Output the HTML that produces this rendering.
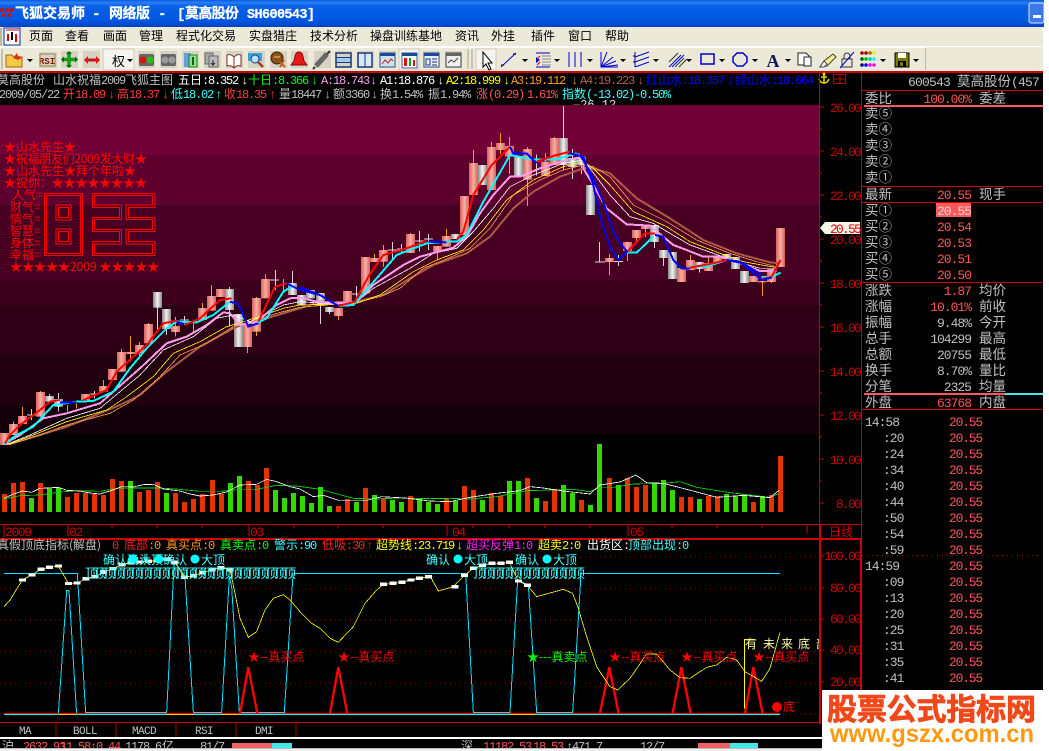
<!DOCTYPE html>
<html><head><meta charset="utf-8"><title>飞狐交易师</title>
<style>
html,body{margin:0;padding:0;background:#fff;width:1049px;height:751px;overflow:hidden}
svg{display:block}
text{font-family:"Liberation Mono","WenQuanYi Zen Hei","Noto Sans CJK SC",monospace;white-space:pre}
.c,tspan.c{font-family:"WenQuanYi Zen Hei","Noto Sans CJK SC",sans-serif;letter-spacing:0}
.r12{font-size:12px;letter-spacing:-1.2px}
.r12 tspan.c{font-size:12px}
.p{font-size:13.5px;fill:#c0c0c0;font-family:"WenQuanYi Zen Hei","Noto Sans CJK SC",sans-serif}
.v{font-size:13px;letter-spacing:-1px;text-anchor:end;fill:#ff5555}
.ax{font-size:13px;letter-spacing:-1.8px;fill:#c80000;text-anchor:end}
.t{font-size:13px;letter-spacing:-1.2px;fill:#ff5555}
.tm{font-size:13px;letter-spacing:-1px;fill:#c0c0c0}
.mn{font-size:12px;fill:#000;font-family:"WenQuanYi Zen Hei","Noto Sans CJK SC",sans-serif}
.rd{font-size:12px;fill:#f00;font-family:"WenQuanYi Zen Hei","Noto Sans CJK SC",sans-serif}
.l{fill:none;shape-rendering:crispEdges}
.dl{stroke:#a00000;stroke-dasharray:1 4;stroke-width:1}
</style></head><body>
<svg xmlns="http://www.w3.org/2000/svg" width="1049" height="751" viewBox="0 0 1049 751">
<defs>
<linearGradient id="tb" x1="0" y1="0" x2="0" y2="1">
<stop offset="0" stop-color="#0a5ae0"/><stop offset=".1" stop-color="#2a80f4"/><stop offset=".22" stop-color="#0a60e8"/><stop offset=".75" stop-color="#0058e0"/><stop offset="1" stop-color="#0042c4"/></linearGradient>
<linearGradient id="pk" x1="0" x2="1" y1="0" y2="0"><stop offset="0" stop-color="#d9605a"/><stop offset=".5" stop-color="#f8b0a6"/><stop offset="1" stop-color="#d9605a"/></linearGradient>
<linearGradient id="gy" x1="0" x2="1" y1="0" y2="0"><stop offset="0" stop-color="#8a8a8a"/><stop offset=".5" stop-color="#f2f2f2"/><stop offset="1" stop-color="#8a8a8a"/></linearGradient>
<clipPath id="cc"><rect x="0" y="105" width="819" height="340"/></clipPath>
<clipPath id="cl"><rect x="0" y="539" width="820" height="183"/></clipPath>
<clipPath id="cs"><rect x="0" y="739" width="1043" height="9"/></clipPath>
<clipPath id="ct"><rect x="0" y="100" width="819" height="5"/></clipPath>
<clipPath id="cr"><rect x="862" y="72" width="180" height="20"/></clipPath>
<clipPath id="c0"><rect x="0" y="72" width="815" height="30"/></clipPath>
</defs>

<!-- window -->
<rect x="0" y="0" width="1043" height="751" fill="#000"/>
<rect x="0" y="0" width="1044" height="27" fill="url(#tb)"/>
<!-- title icon -->
<g fill="#d01010"><circle cx="2" cy="10" r="2"/><circle cx="7" cy="10" r="2"/><circle cx="12" cy="10" r="2"/><circle cx="4" cy="15" r="2"/><circle cx="9" cy="15" r="2"/></g>
<g fill="#fff" font-weight="bold" font-size="14" stroke="#fff" stroke-width=".25">
<text class="c" x="15" y="18" font-size="14" textLength="70">飞狐交易师</text>
<text x="92" y="18">-</text>
<text class="c" x="109" y="18" textLength="41">网络版</text>
<text x="158" y="18">-</text>
<text x="177" y="18">[</text><text class="c" x="185" y="18" textLength="54">莫高股份</text>
<text x="247" y="18" font-size="13.5" textLength="68">SH600543]</text>
</g>
<rect x="1029" y="3" width="15" height="20" rx="2" fill="#3c78e8" stroke="#dfe8ff"/>
<rect x="1033" y="15" width="8" height="3" fill="#fff"/>

<!-- menu -->
<rect x="0" y="27" width="1044" height="20" fill="#ece9d8"/>
<rect x="0" y="46" width="1044" height="1" fill="#fff"/>
<rect x="0" y="28" width="2" height="18" fill="#bdb9a4"/>
<rect x="4" y="28" width="16" height="17" fill="#fff" stroke="#0a2a9a"/>
<path d="M6 30h13" stroke="#d00000"/><rect x="7" y="34" width="2" height="7" fill="#e00000"/><rect x="11" y="32" width="2" height="8" fill="#000"/><rect x="15" y="34" width="2" height="8" fill="#e00000"/>
<g class="mn">
<text class="mn" x="29" y="40">页面</text><text class="mn" x="65" y="40">查看</text><text class="mn" x="103" y="40">画面</text><text class="mn" x="139" y="40">管理</text><text class="mn" x="176" y="40">程式化交易</text><text class="mn" x="249" y="40">实盘猎庄</text><text class="mn" x="310" y="40">技术分析</text><text class="mn" x="370" y="40">操盘训练基地</text><text class="mn" x="455" y="40">资讯</text><text class="mn" x="491" y="40">外挂</text><text class="mn" x="531" y="40">插件</text><text class="mn" x="568" y="40">窗口</text><text class="mn" x="605" y="40">帮助</text>
</g>

<!-- toolbar -->
<rect x="0" y="47" width="1044" height="24" fill="#ece9d8"/>
<rect x="0" y="47" width="926" height="1" fill="#fff"/>
<rect x="925" y="48" width="1" height="22" fill="#bdb9a4"/>
<rect x="1" y="49" width="2" height="20" fill="#c4c0aa"/>
<!-- button bgs -->
<g fill="#d6d3c4">
<rect x="39" y="52" width="18" height="16"/><rect x="61" y="51" width="17" height="17"/><rect x="83" y="51" width="17" height="17"/>
<rect x="138" y="51" width="17" height="17"/><rect x="160" y="51" width="17" height="17"/><rect x="182" y="51" width="17" height="17"/><rect x="204" y="51" width="17" height="17"/><rect x="226" y="51" width="17" height="17"/><rect x="248" y="51" width="17" height="17"/><rect x="270" y="51" width="17" height="17"/><rect x="291" y="51" width="17" height="17"/><rect x="314" y="51" width="17" height="17"/><rect x="335" y="51" width="17" height="17"/><rect x="357" y="51" width="17" height="17"/><rect x="379" y="51" width="17" height="17"/>
<rect x="423" y="51" width="17" height="17"/><rect x="445" y="51" width="17" height="17"/>
</g>
<rect x="103" y="49" width="31" height="21" fill="#f5f4ee" stroke="#cfccba"/>
<rect x="399" y="49" width="20" height="21" fill="#f5f4ee" stroke="#cfccba"/>
<rect x="476" y="49" width="20" height="21" fill="#f5f4ee" stroke="#cfccba"/>
<path d="M468 49v20M472 49v20" stroke="#bdb9a4" stroke-width="1.5"/>
<!-- folder -->
<path d="M6 55h6l2 2h8v10H6z" fill="#f5c84a" stroke="#9a6a10"/><path d="M13 58l4-5 1 3 5 1-5 3z" fill="#e03010"/>
<g fill="#000"><path d="M27 59h6l-3 3zM127 59h6l-3 3zM522 59h6l-3 3zM554 59h6l-3 3zM587 59h6l-3 3zM620 59h6l-3 3zM653 59h6l-3 3zM686 59h6l-3 3zM719 59h6l-3 3zM752 59h6l-3 3zM785 59h6l-3 3zM880 59h6l-3 3zM913 59h6l-3 3z"/></g>
<text x="47" y="64" font-size="9" fill="#7a2000" text-anchor="middle" font-weight="bold">RSI</text>
<rect x="40" y="54" width="15" height="12" fill="none" stroke="#a08050"/>
<path d="M69 52v15M62 59.500h15" stroke="#1a9a1a" stroke-width="3.500"/><path d="M69 51l-3 3h6zM69 68l-3-3h6zM61 59.500l3-3v6zM78 59.500l-3-3v6z" fill="#0a6a0a"/>
<path d="M85 60h14" stroke="#c01818" stroke-width="3"/><path d="M84 60l4-4v8zM100 60l-4-4v8z" fill="#e01818"/>
<text class="c" x="112" y="66" font-size="13" fill="#000">权</text>
<rect x="139" y="54" width="15" height="12" rx="2" fill="#666"/><circle cx="143" cy="60" r="3.500" fill="#e01010"/><circle cx="150" cy="60" r="3.500" fill="#20c020"/>
<rect x="161" y="54" width="15" height="12" rx="2" fill="#666"/><circle cx="165" cy="60" r="3.500" fill="#999"/><circle cx="172" cy="60" r="3.500" fill="#999"/>
<rect x="184" y="53" width="7" height="14" fill="#60a0e0"/><rect x="189" y="55" width="8" height="12" fill="#8ee08e" stroke="#208020"/><path d="M193 57v8" stroke="#0a6a0a" stroke-width="2"/>
<rect x="205" y="53" width="8" height="11" fill="#aaa" stroke="#666"/><rect x="209" y="56" width="9" height="11" fill="#bbb" stroke="#666"/><path d="M213 60v4m-2-1l2 2 2-2" stroke="#222" fill="none"/>
<path d="M227 55c3-1 5 0 7 2 2-2 4-3 7-2v11c-3-1-5 0-7 2-2-2-4-3-7-2z" fill="#fff" stroke="#803020"/><path d="M234 57v11" stroke="#803020"/>
<rect x="248" y="53" width="14" height="8" fill="#40a0d0"/><circle cx="255" cy="59" r="4" fill="#bfe0ff" stroke="#0a4a90"/><path d="M258 62l5 5" stroke="#a04010" stroke-width="2.500"/>
<circle cx="277" cy="58" r="6" fill="#8a5020" stroke="#3a2000"/><path d="M274 57h6" stroke="#f0d040"/><path d="M280 62l5 5M284 60l-4 7" stroke="#c06020" stroke-width="2"/>
<path d="M299 52c-4 0-4 5-5 9l-3 4h16l-3-4c-1-4-1-9-5-9z" fill="#e81818" stroke="#900"/>
<path d="M316 66l11-12" stroke="#666" stroke-width="5"/><path d="M327 54l3-3M315 67l-2 2" stroke="#333" stroke-width="2"/>
<g fill="none" stroke="#1a3a7a"><rect x="336" y="53" width="15" height="14" stroke-width="1.500"/><path d="M336 57.500h15M336 62.500h15"/></g><rect x="337" y="58" width="13" height="4" fill="#a0c8f0"/>
<rect x="358" y="53" width="14" height="14" fill="#d8e8f8" stroke="#1a3a7a" stroke-width="1.500"/><path d="M365 53v14" stroke="#1a3a7a"/>
<rect x="380" y="53" width="15" height="14" fill="#cfe0f0" stroke="#3a5a8a"/><rect x="380" y="53" width="15" height="3" fill="#1a4a9a"/><path d="M382 64l3-4 3 3 3-4 2 2" stroke="#c02020" fill="none"/>
<rect x="402" y="53" width="15" height="15" fill="#fff" stroke="#3a5a8a"/><rect x="402" y="53" width="15" height="3" fill="#1a4a9a"/><rect x="404" y="58" width="3" height="8" fill="#e01010"/><rect x="409" y="58" width="2" height="8" fill="#10a010"/><rect x="413" y="60" width="2" height="6" fill="#e01010"/>
<rect x="424" y="53" width="15" height="14" fill="#e8eef8" stroke="#3a5a8a"/><rect x="424" y="53" width="15" height="3" fill="#1a4a9a"/><path d="M426 59h4v6h-4zM432 59h5M432 62h5M432 65h5" stroke="#1a3a7a" fill="none"/>
<rect x="446" y="53" width="15" height="14" fill="#eee" stroke="#444"/><rect x="446" y="53" width="15" height="3" fill="#666"/><path d="M448 63l3-3 3 2 4-4" stroke="#444" fill="none"/>
<!-- drawing tools -->
<path d="M483 52v15l3-3 3 6 2-1-3-6h4z" fill="#fff" stroke="#000"/>
<path d="M501 67l15-14" stroke="#0000d0"/><path d="M501 65h3M513 54h3" stroke="#000"/>
<g stroke="#0000c0" fill="none"><path d="M536 53h14"/><path d="M536 67h14"/></g><g stroke="#888"><path d="M542 56h9M542 59h9M542 62h9M542 65h9"/></g><path d="M536 57l4 3-4 3z" fill="#0000c0"/><path d="M540 56l-3 3M540 62l-3 3" stroke="#c00"/>
<path d="M569 52v15M575 52v15M581 52v15" stroke="#0000d0"/>
<g stroke="#0000d0" fill="none"><path d="M601 67l6-15M601 67l12-10M601 67l15-6M601 67l17-2M601 52v15h17"/></g>
<g stroke="#0000d0" fill="none"><path d="M635 52v15M635 57l14-5M635 62l14-5M635 67l14-5"/></g><path d="M633 56h2M633 62h2" stroke="#000"/>
<g stroke="#333" fill="none"><path d="M669 67l12-12M672 67l12-12" stroke="#0000d0"/><path d="M669 62l9-9M675 67l9-9M679 67l8-8"/></g>
<rect x="701" y="54" width="13" height="10" fill="none" stroke="#0000d0" stroke-width="1.500"/>
<path d="M735 53h6l4 4v5l-4 4h-6l-4-4v-5z" fill="none" stroke="#0000d0" stroke-width="1.500" transform="translate(2 0)"/>
<text x="773" y="67" font-size="18" font-weight="bold" fill="#14145a" text-anchor="middle" style="font-family:'Liberation Serif',serif">A</text>
<path d="M798 53h8l3 3v9h-11z" fill="#fff" stroke="#222"/><rect x="804" y="57" width="7" height="9" fill="#fff" stroke="#222"/>
<path d="M820 67l4-6 9-7 3 3-9 9z" fill="#f6ee8a" stroke="#444"/><path d="M820 67l4-6 3 3-3 3z" fill="#fff" stroke="#444"/>
<rect x="842" y="59" width="10" height="8" fill="none" stroke="#333"/><path d="M844 59v-3a3 3 0 0 1 6 0v3" fill="none" stroke="#333"/><path d="M840 68l14-16" stroke="#0000d0"/>
<g><circle cx="862" cy="53" r="1.800" fill="#a00000"/><circle cx="866" cy="53" r="1.800" fill="#a00000"/><circle cx="870" cy="53" r="1.800" fill="#808000"/><circle cx="874" cy="53" r="1.800" fill="#eeee00"/>
<circle cx="862" cy="59" r="1.800" fill="#006000"/><circle cx="866" cy="59" r="1.800" fill="#00c000"/><circle cx="870" cy="59" r="1.800" fill="#00c0c0"/><circle cx="874" cy="59" r="1.800" fill="#00ffff"/>
<circle cx="862" cy="65" r="1.800" fill="#000090"/><circle cx="866" cy="65" r="1.800" fill="#0000ff"/><circle cx="870" cy="65" r="1.800" fill="#ff00ff"/><circle cx="874" cy="65" r="1.800" fill="#ff00ff"/></g>
<rect x="895" y="53" width="14" height="14" fill="#7a7a00" stroke="#000"/><rect x="898" y="53" width="8" height="5" fill="#fff"/><rect x="898" y="61" width="8" height="6" fill="#000"/><rect x="900" y="62" width="3" height="4" fill="#7a7a00"/>

<!-- top red line -->
<rect x="0" y="71" width="1043" height="2" fill="#d00000"/>

<!-- info rows -->
<g clip-path="url(#c0)">
<g class="r12">
<text class="r12" x="-3" y="84" fill="#c0c0c0"><tspan class="c">莫高股份</tspan></text>
<text class="r12" x="53" y="84" fill="#c0c0c0"><tspan class="c">山水祝福</tspan>2009<tspan class="c">飞狐主图</tspan></text>
<text class="r12" x="178" y="84" fill="#fff"><tspan class="c">五日</tspan>:8.352</text><text class="r12" x="241" y="84" fill="#fff">↓</text>
<text class="r12" x="248" y="84" fill="#00ff00"><tspan class="c">十日</tspan>:8.366</text><text class="r12" x="311" y="84" fill="#00ff00">↓</text>
<text class="r12" x="321" y="84" fill="#ff9cf0">A:18.743</text><text class="r12" x="370" y="84" fill="#ff9cf0">↓</text>
<text class="r12" x="380" y="84" fill="#fff">A1:18.876</text><text class="r12" x="437" y="84" fill="#fff">↓</text>
<text class="r12" x="446" y="84" fill="#ffff00">A2:18.999</text><text class="r12" x="503" y="84" fill="#ffff00">↓</text>
<text class="r12" x="511" y="84" fill="#ff9a30">A3:19.112</text><text class="r12" x="571" y="84" fill="#ff9a30">↓</text>
<text class="r12" x="580" y="84" fill="#b06050">A4:19.223</text><text class="r12" x="637" y="84" fill="#b06050">↓</text>
<text class="r12" x="646" y="84" fill="#0000ff"><tspan class="c">红山水</tspan>:18.357</text><text class="r12" x="727" y="84" fill="#0000ff">↓</text>
<text class="r12" x="735" y="84" fill="#0000ff"><tspan class="c">绿山水</tspan>:18.664</text>

<text class="r12" x="-1" y="98" fill="#c0c0c0">2009/05/22</text>
<text class="r12" x="63" y="98" fill="#ff3c3c"><tspan class="c">开</tspan>18.09</text><text class="r12" x="108" y="98" fill="#ff3c3c">↓</text>
<text class="r12" x="117" y="98" fill="#ff3c3c"><tspan class="c">高</tspan>18.37</text><text class="r12" x="162" y="98" fill="#ff3c3c">↓</text>
<text class="r12" x="171" y="98" fill="#40ffff"><tspan class="c">低</tspan>18.02</text><text class="r12" x="215" y="98" fill="#40ffff">↑</text>
<text class="r12" x="224" y="98" fill="#ff3c3c"><tspan class="c">收</tspan>18.35</text><text class="r12" x="269" y="98" fill="#ff3c3c">↑</text>
<text class="r12" x="279" y="98" fill="#c0c0c0"><tspan class="c">量</tspan>18447</text><text class="r12" x="324" y="98" fill="#c0c0c0">↓</text>
<text class="r12" x="333" y="98" fill="#c0c0c0"><tspan class="c">额</tspan>3360</text><text class="r12" x="371" y="98" fill="#c0c0c0">↓</text>
<text class="r12" x="380" y="98" fill="#c0c0c0"><tspan class="c">换</tspan>1.54%</text>
<text class="r12" x="428" y="98" fill="#c0c0c0"><tspan class="c">振</tspan>1.94%</text>
<text class="r12" x="476" y="98" fill="#ff5555"><tspan class="c">涨</tspan>(0.29)</text>
<text class="r12" x="527" y="98" fill="#ff5555">1.61%</text>
<text class="r12" x="562" y="98" fill="#40ffff"><tspan class="c">指数</tspan>(-13.02)-0.50%</text>
</g></g>
<!-- anchor + day box -->
<g stroke="#e8d800" fill="none" stroke-width="1.500"><path d="M824 74v9"/><path d="M819 79c1 3 3 4 5 4s4-1 5-4"/><path d="M821 77h6"/></g>
<circle cx="824" cy="74" r="1.500" fill="#e8d800"/>
<rect x="833.500" y="74.500" width="12" height="9" fill="none" stroke="#c00000"/><path d="M833.500 79h12M840 74.500v9" stroke="#c00000"/>

<!-- price chart bg -->
<g shape-rendering="crispEdges">
<rect x="0" y="105" width="819" height="50" fill="#700036"/>
<rect x="0" y="155" width="819" height="50" fill="#5e002d"/>
<rect x="0" y="205" width="819" height="75" fill="#480022"/>
<rect x="0" y="280" width="819" height="25" fill="#3c001c"/>
<rect x="0" y="305" width="819" height="50" fill="#2e0016"/>
<rect x="0" y="355" width="819" height="50" fill="#20000f"/>
<rect x="0" y="405" width="819" height="28" fill="#130009"/>
</g>
<text x="573" y="108" clip-path="url(#ct)" font-size="12" fill="#e0e0e0">—26.12</text>

<!-- red banner -->
<g class="rd">
<text class="rd" x="4" y="151">★山水先生★</text>
<text class="rd" x="4" y="163" textLength="143">★祝福朋友们2009发大财★</text>
<text class="rd" x="4" y="175">★山水先生★拜个年啦★</text>
<text class="rd" x="4" y="187" textLength="143">★祝你：★★★★★★★★</text>
<text class="rd" x="12" y="199">人气=</text>
<text class="rd" x="10" y="211">财气=</text>
<text class="rd" x="10" y="223">情气=</text>
<text class="rd" x="10" y="235">智慧=</text>
<text class="rd" x="10" y="247">身体=</text>
<text class="rd" x="10" y="259">幸福=</text>
<text class="rd" x="10" y="271">★★★★★2009 ★★★★★</text>
</g>
<g transform="translate(0,105) scale(.33333)" fill="none" stroke="#f00" stroke-width="3" shape-rendering="crispEdges">
<rect x="133" y="265" width="115" height="187"/><rect x="140" y="272" width="101" height="173"/>
<rect x="168" y="300" width="45" height="45"/><rect x="175" y="307" width="31" height="31"/>
<rect x="168" y="372" width="45" height="45"/><rect x="175" y="379" width="31" height="31"/>
<polygon points="277,265 465,265 465,307 385,307 385,337 465,337 465,380 385,380 385,410 465,410 465,452 277,452 277,410 358,410 358,380 277,380 277,337 358,337 358,307 277,307"/>
<polygon points="284,272 458,272 458,300 378,300 378,344 458,344 458,373 378,373 378,417 458,417 458,445 284,445 284,417 365,417 365,373 284,373 284,344 365,344 365,300 284,300"/>
</g>

<!-- candles -->
<g clip-path="url(#cc)"><g transform="translate(0,105) scale(.33333)">
<g shape-rendering="crispEdges">
<path fill="none" stroke="#ff9a10" stroke-width="3" d="M40 950V960M67 906V935M121 858V862M202 900V920M229 895V910M310 825V845M364 732V742M391 693V770M418 711V722M418 745V760M445 654V660M526 636V695M580 645V680M607 594V610M634 540V575M742 645V744M769 576V693M796 507V525M850 522V560M1015 609V645M1123 447V460M1150 420V486M1231 384V388M1312 440V466M1339 372V393M1420 135V175M1474 111V127M1501 84V147M1528 96V207M1582 126V303M1636 144V170M1663 96V100M1828 447V510M1882 438V468M1909 399V410M1936 372V396M2071 450V465M2125 456V475M2287 520V573M2314 531V534"/>
<path fill="none" stroke="#d8d8d8" stroke-width="3" d="M94 912V945M148 867V873M175 864V920M283 858V880M472 608V680M499 672V690M553 633V660M688 546V552M688 615V665M826 495V555M877 498V534M961 603V657M988 621V627M1069 543V580M1177 411V465M1204 417V445M1258 378V440M1285 387V435M1609 148V212M1690 3V99M1690 180V195M1717 132V159M1717 186V222M1744 180V207M1798 411V471M1855 450V483M1963 411V429M1990 459V483M2098 492V503M81 930H108M270 867H297M540 645H567M810 525H837M1056 567H1083M1164 435H1191M1191 432H1218M1245 408H1272M1272 402H1299M1596 165H1623M1785 471H1815M1842 470H1869"/>
</g>
<g fill="url(#pk)">
<rect x="0" y="984" width="27" height="36"/><rect x="27" y="957" width="27" height="33"/><rect x="54" y="933" width="27" height="24"/><rect x="108" y="861" width="27" height="74"/><rect x="243" y="867" width="27" height="18"/><rect x="297" y="843" width="27" height="17"/><rect x="324" y="792" width="27" height="33"/><rect x="351" y="741" width="27" height="59"/><rect x="378" y="741" width="27" height="6"/><rect x="405" y="720" width="27" height="25"/><rect x="432" y="657" width="27" height="58"/><rect x="513" y="663" width="27" height="18"/><rect x="594" y="609" width="27" height="36"/><rect x="621" y="573" width="27" height="44"/><rect x="648" y="552" width="27" height="24"/><rect x="729" y="660" width="27" height="66"/><rect x="756" y="579" width="27" height="101"/><rect x="783" y="522" width="27" height="58"/>
<rect x="1002" y="609" width="27" height="24"/><rect x="1029" y="558" width="27" height="39"/><rect x="1083" y="456" width="27" height="109"/><rect x="1110" y="459" width="27" height="12"/><rect x="1137" y="435" width="27" height="35"/><rect x="1218" y="387" width="27" height="57"/><rect x="1299" y="423" width="27" height="17"/><rect x="1326" y="393" width="27" height="32"/><rect x="1380" y="273" width="27" height="117"/><rect x="1407" y="174" width="27" height="96"/><rect x="1461" y="126" width="27" height="129"/><rect x="1488" y="114" width="27" height="21"/><rect x="1515" y="123" width="27" height="32"/><rect x="1569" y="132" width="27" height="92"/><rect x="1623" y="170" width="27" height="43"/><rect x="1650" y="99" width="27" height="81"/>
<rect x="1815" y="459" width="27" height="12"/><rect x="1869" y="411" width="27" height="27"/><rect x="1896" y="375" width="27" height="24"/><rect x="1923" y="363" width="27" height="9"/><rect x="2031" y="489" width="27" height="42"/><rect x="2058" y="465" width="27" height="30"/><rect x="2112" y="474" width="27" height="24"/><rect x="2139" y="453" width="27" height="19"/><rect x="2247" y="513" width="27" height="18"/><rect x="2274" y="528" width="27" height="4"/><rect x="2301" y="492" width="27" height="39"/><rect x="2328" y="369" width="27" height="117"/>
</g>
<g fill="url(#gy)">
<rect x="135" y="873" width="27" height="17"/><rect x="162" y="882" width="27" height="23"/><rect x="459" y="561" width="27" height="47"/><rect x="486" y="612" width="27" height="60"/><rect x="675" y="552" width="27" height="63"/><rect x="702" y="627" width="27" height="99"/><rect x="864" y="534" width="27" height="36"/><rect x="891" y="570" width="27" height="30"/><rect x="918" y="555" width="27" height="25"/><rect x="948" y="564" width="27" height="39"/><rect x="975" y="606" width="27" height="15"/><rect x="1353" y="387" width="27" height="15"/><rect x="1434" y="180" width="27" height="60"/><rect x="1542" y="153" width="27" height="60"/><rect x="1677" y="99" width="27" height="81"/><rect x="1704" y="159" width="27" height="27"/><rect x="1731" y="156" width="27" height="24"/><rect x="1758" y="240" width="27" height="90"/><rect x="1950" y="360" width="27" height="51"/><rect x="1977" y="435" width="27" height="24"/><rect x="2004" y="441" width="27" height="81"/><rect x="2085" y="471" width="27" height="21"/><rect x="2166" y="447" width="27" height="15"/><rect x="2193" y="456" width="27" height="36"/><rect x="2220" y="498" width="27" height="36"/>
</g>
<!-- MA lines -->
<polyline class="l" stroke="#ad5a44" stroke-width="6" points="20,1020 120,990 200,965 300,925 360,900 420,870 500,800 600,725 700,670 750,650 800,640 900,610 960,590 1000,592 1070,590 1150,570 1230,520 1300,480 1400,445 1470,395 1540,310 1600,260 1680,215 1750,190 1770,188 1830,205 1910,280 2010,340 2110,405 2210,445 2310,472 2340,475"/>
<polyline class="l" stroke="#ff9a50" stroke-width="2.400" points="25,1020 120,990 200,960 330,925 400,885 480,815 540,750 620,715 700,665 750,650 830,625 900,607 1070,592 1140,575 1200,550 1270,490 1340,462 1410,430 1470,370 1540,270 1620,225 1690,195 1750,180 1780,185 1830,215 1900,300 2000,350 2090,405 2190,445 2270,470 2330,485"/>
<polyline class="l" stroke="#ffff00" stroke-width="2.400" points="25,1018 100,990 200,950 320,915 380,875 460,815 520,745 600,710 680,665 730,650 790,630 850,610 900,600 1070,595 1140,570 1240,500 1310,465 1390,435 1450,375 1520,285 1600,225 1690,185 1750,170 1780,190 1830,240 1900,320 2000,365 2070,410 2160,445 2230,470 2330,488"/>
<polyline class="l" stroke="#fff" stroke-width="2.400" points="20,1018 90,990 200,940 300,910 360,860 420,810 490,735 580,695 650,640 700,630 750,650 800,625 850,600 900,590 1000,597 1070,590 1120,550 1230,490 1300,445 1370,430 1420,380 1480,310 1530,245 1600,210 1690,175 1750,165 1770,190 1830,270 1890,335 1960,355 2010,385 2070,420 2140,445 2210,470 2280,490 2330,490"/>
<polyline class="l" stroke="#ff9cf0" stroke-width="6" points="15,1015 60,990 130,940 200,925 300,895 340,860 420,790 500,715 560,695 620,660 670,622 690,625 720,660 770,650 830,600 870,580 900,578 950,590 1010,595 1070,590 1120,540 1210,480 1260,455 1360,428 1400,395 1440,325 1480,270 1530,215 1560,215 1620,190 1700,165 1750,155 1750,190 1780,240 1820,310 1880,358 1950,362 2020,420 2060,435 2110,455 2160,455 2210,470 2280,498 2330,498"/>
<g class="l" stroke="#00ffff" stroke-width="6">
<polyline points="10,1018 50,990 100,965 160,900 230,890 280,888 340,860 390,790 440,730 500,670 530,650 590,652 640,630 690,590"/>
<polyline points="770,655 800,640 850,560 875,545"/>
<polyline points="1015,603 1060,600 1130,520 1190,450 1280,415 1340,410 1370,410 1400,390 1450,290 1530,150 1600,163 1670,163 1730,145"/>
<polyline points="1880,443 1910,443 1960,395"/>
<polyline points="2070,485 2120,485 2180,465"/>
<polyline points="2285,516 2315,516 2342,503"/>
<polyline points="1710,148 1740,148"/>
</g>
<g class="l" stroke="#ff0000" stroke-width="6">
<polyline points="15,1015 30,990 60,960 120,915 150,890 180,885"/>
<polyline points="250,885 320,855 350,800 400,755 440,720 490,655 530,647"/>
<polyline points="555,660 600,640 660,585 695,580"/>
<polyline points="775,650 825,545 860,535"/>
<polyline points="1015,603 1065,590 1105,515 1150,450 1220,430 1280,407"/>
<polyline points="1370,405 1390,380 1420,270 1475,180 1530,125"/>
<polyline points="1610,170 1670,150 1710,140"/>
<polyline points="1882,440 1935,385 1965,385"/>
<polyline points="2070,488 2140,475 2180,465"/>
<polyline points="2285,522 2315,515 2342,465"/>
</g>
<g class="l" stroke="#0000ff" stroke-width="6">
<polyline points="180,893 230,893"/>
<polyline points="530,650 553,658"/>
<polyline points="690,590 715,597 745,665 775,655"/>
<polyline points="860,535 900,555 960,570 1015,603"/>
<polyline points="900,547 960,570 1015,603"/>
<polyline points="1285,410 1340,412"/>
<polyline points="1530,125 1540,145 1580,145 1610,175"/>
<polyline points="1710,145 1750,155 1780,240 1800,335 1830,425 1855,465 1882,440"/>
<polyline points="1740,150 1770,200 1810,290 1840,380 1860,415 1882,440"/>
<polyline points="1965,390 1990,395 2020,465 2045,490 2070,490"/>
<polyline points="2180,465 2220,470 2285,525 2315,518"/>
<polyline points="2180,465 2230,475 2285,510"/>
</g>
</g></g>

<!-- volume -->
<g transform="translate(0,430) scale(.33333)">
<g shape-rendering="crispEdges">
<g fill="#e63200">
<rect x="6" y="192" width="15" height="54"/><rect x="33" y="159" width="15" height="87"/><rect x="60" y="156" width="15" height="90"/><rect x="114" y="159" width="15" height="87"/><rect x="195" y="201" width="15" height="45"/><rect x="222" y="189" width="15" height="57"/><rect x="249" y="189" width="15" height="57"/><rect x="276" y="192" width="15" height="54"/><rect x="303" y="195" width="15" height="51"/><rect x="330" y="147" width="15" height="99"/><rect x="357" y="153" width="15" height="93"/><rect x="411" y="186" width="15" height="60"/><rect x="438" y="180" width="15" height="66"/><rect x="465" y="156" width="15" height="90"/><rect x="519" y="189" width="15" height="57"/><rect x="546" y="216" width="15" height="30"/><rect x="573" y="207" width="15" height="39"/><rect x="600" y="192" width="15" height="54"/><rect x="630" y="150" width="15" height="96"/><rect x="657" y="192" width="15" height="54"/><rect x="738" y="153" width="15" height="93"/><rect x="765" y="165" width="15" height="81"/><rect x="792" y="114" width="15" height="132"/><rect x="1008" y="228" width="15" height="18"/><rect x="1035" y="207" width="15" height="39"/><rect x="1089" y="174" width="15" height="72"/><rect x="1143" y="204" width="15" height="42"/><rect x="1224" y="198" width="15" height="48"/>
<rect x="1332" y="207" width="15" height="39"/><rect x="1386" y="168" width="15" height="78"/><rect x="1413" y="180" width="15" height="66"/><rect x="1467" y="189" width="15" height="57"/><rect x="1494" y="198" width="15" height="48"/><rect x="1575" y="144" width="15" height="102"/><rect x="1629" y="213" width="15" height="33"/><rect x="1656" y="177" width="15" height="69"/><rect x="1737" y="210" width="15" height="36"/><rect x="1821" y="144" width="15" height="102"/><rect x="1875" y="144" width="15" height="102"/><rect x="1902" y="171" width="15" height="75"/><rect x="1929" y="165" width="15" height="81"/><rect x="2037" y="201" width="15" height="45"/><rect x="2064" y="201" width="15" height="45"/><rect x="2118" y="198" width="15" height="48"/><rect x="2145" y="198" width="15" height="48"/><rect x="2253" y="216" width="15" height="30"/><rect x="2307" y="195" width="15" height="51"/><rect x="2334" y="78" width="15" height="168"/>
</g>
<g fill="#33d800">
<rect x="87" y="204" width="15" height="42"/><rect x="141" y="174" width="15" height="72"/><rect x="168" y="174" width="15" height="72"/><rect x="384" y="153" width="15" height="93"/><rect x="492" y="189" width="15" height="57"/><rect x="684" y="159" width="15" height="87"/><rect x="711" y="138" width="15" height="108"/><rect x="819" y="180" width="15" height="66"/><rect x="846" y="204" width="15" height="42"/><rect x="873" y="189" width="15" height="57"/><rect x="900" y="198" width="15" height="48"/><rect x="927" y="219" width="15" height="27"/><rect x="954" y="171" width="15" height="75"/><rect x="981" y="228" width="15" height="18"/><rect x="1062" y="216" width="15" height="30"/><rect x="1116" y="195" width="15" height="51"/><rect x="1170" y="210" width="15" height="36"/><rect x="1197" y="216" width="15" height="30"/><rect x="1251" y="207" width="15" height="39"/><rect x="1278" y="216" width="15" height="30"/>
<rect x="1305" y="222" width="15" height="24"/><rect x="1359" y="213" width="15" height="33"/><rect x="1440" y="210" width="15" height="36"/><rect x="1521" y="153" width="15" height="93"/><rect x="1548" y="153" width="15" height="93"/><rect x="1602" y="204" width="15" height="42"/><rect x="1683" y="165" width="15" height="81"/><rect x="1710" y="189" width="15" height="57"/><rect x="1764" y="225" width="15" height="21"/><rect x="1791" y="42" width="15" height="204"/><rect x="1848" y="165" width="15" height="81"/><rect x="1956" y="162" width="15" height="84"/><rect x="1983" y="150" width="15" height="96"/><rect x="2010" y="180" width="15" height="66"/><rect x="2091" y="207" width="15" height="39"/><rect x="2172" y="192" width="15" height="54"/><rect x="2199" y="198" width="15" height="48"/><rect x="2226" y="192" width="15" height="54"/><rect x="2280" y="198" width="15" height="48"/>
</g>
<polyline class="l" stroke="#00e000" stroke-width="2.400" points="12,207 60,197 120,195 180,186 240,182 300,184 360,174 420,174 480,174 540,178 600,184 660,184 720,178 770,178 830,166 890,168 960,178 1060,205 1130,207 1200,204 1290,206 1350,205 1410,207 1490,200 1580,182 1650,180 1720,178 1770,185 1800,172 1840,172 1900,162 1990,160 2040,155 2090,172 2190,188 2250,195 2310,202 2338,190"/>
<polyline class="l" stroke="#fff" stroke-width="2.400" points="12,205 40,192 67,183 95,187 120,175 175,172 200,181 240,183 270,189 300,192 330,183 365,170 400,171 430,164 460,163 490,177 540,183 570,192 600,198 640,195 680,186 720,165 770,163 800,148 830,155 870,170 900,177 940,200 970,196 1015,211 1100,211 1145,200 1215,204 1290,213 1350,215 1410,202 1490,190 1560,182 1590,170 1630,174 1690,183 1770,192 1800,165 1860,156 1908,135 1940,158 1990,160 2060,178 2150,202 2230,196 2310,203 2338,180"/>
</g></g>

<!-- date axis -->
<rect x="0" y="524" width="862" height="1" fill="#d00000"/>
<rect x="0" y="538" width="862" height="2" fill="#d00000"/>
<path d="M4 524v13M68 524v12M249 524v12M447 524v12M628 524v12M112 524v4M157 524v4M202 524v4M294 524v4M338 524v4M383 524v4M473 524v4M509 524v4M545 524v4M590 524v4M672 524v4M717 524v4M762 524v4M807 524v9" stroke="#d00000" shape-rendering="crispEdges"/>
<g font-size="13" fill="#d00000" letter-spacing="-1.4">
<text x="5" y="536">2009</text><text x="69" y="536">02</text><text x="250" y="536">03</text><text x="452" y="536">04</text><text x="630" y="536">05</text>
</g>
<text class="c" x="829" y="536" font-size="12" fill="#d00000" textLength="24">日线</text>

<!-- indicator header -->
<g class="r12">
<text class="r12" x="-3" y="549" fill="#c0c0c0"><tspan class="c">真假顶底指标(解盘)</tspan></text>
<text class="r12" x="112" y="549" fill="#ff2020">0</text>
<text class="r12" x="124" y="549" fill="#ff2020"><tspan class="c">底部</tspan><tspan fill="#ff9a10">:0</tspan></text>
<text class="r12" x="166" y="549" fill="#ff9a10"><tspan class="c">真买点</tspan>:0</text>
<text class="r12" x="220" y="549" fill="#00ff00"><tspan class="c">真卖点</tspan>:0</text>
<text class="r12" x="274" y="549" fill="#40ffff"><tspan class="c">警示</tspan>:90</text>
<text class="r12" x="322" y="549" fill="#ff2020"><tspan class="c">低吸</tspan>:30</text><text class="r12" x="366" y="549" fill="#ff2020">↑</text>
<text class="r12" x="376" y="549" fill="#ffff00"><tspan class="c">超势线</tspan>:23.719</text><text class="r12" x="456" y="549" fill="#ffff00">↓</text>
<text class="r12" x="466" y="549" fill="#ff20ff"><tspan class="c">超买反弹</tspan>1:0</text>
<text class="r12" x="538" y="549" fill="#ffff00"><tspan class="c">超卖</tspan>2:0</text>
<text class="r12" x="587" y="549" fill="#fff"><tspan class="c">出货区</tspan>:</text>
<text class="r12" x="628" y="549" fill="#40ffff"><tspan class="c">顶部出现</tspan>:0</text>
</g>

<!-- indicator chart -->
<g class="dl">
<path class="dl" d="M0 557H819M0 589H819M0 620H819M0 651H819M0 683H819M0 714H819"/>
</g>
<g clip-path="url(#cl)">
<g transform="translate(0,430) scale(.33333)">
<g class="l">
<polyline stroke="#00e0ff" stroke-width="3" points="12,430 232,430 257,847 500,847 522,405 527,400 555,440 580,847 665,847 688,440 695,470 718,847 853,847 878,450 880,430 1397,430 1420,847 1530,847 1553,450 1585,465 1610,847 1718,847 1742,450 1742,430 2340,430"/>
<polyline stroke="#00e0ff" stroke-width="3" points="175,853 200,482 207,482 230,853"/>
<polyline stroke="#ff0000" stroke-width="3" points="12,850 2340,850"/>
<polyline stroke="#00ffff" stroke-width="3" points="12,853 2340,853"/>
<path stroke="#ffcc00" stroke-width="3" d="M175 853H230M500 853H580M665 853H718M1530 853H1610"/>
<path stroke="#ff0000" stroke-width="7" d="M720 850L745 712L772 850M990 850L1015 712L1042 850M1800 850L1828 712L1856 850M2018 850L2044 712L2072 850M2235 850L2260 712L2288 850"/>
<path stroke="#ffff00" stroke-width="3" d="M2233 835V628H2265"/>
<polyline stroke="#ffff00" stroke-width="2.400" points="12,530 30,510 67,450 95,435 122,418 148,412 175,408 205,460 230,460 258,446 285,440 310,427 338,416 365,404 392,398 418,396 445,394 472,392 500,388 525,397 553,442 580,437 607,428 635,420 662,413 690,419 703,480 720,565 745,622 770,605 795,540 820,505 850,494 870,510 900,545 935,580 960,595 990,625 1015,637 1060,590 1095,520 1130,480 1150,463 1178,460 1205,457 1232,450 1258,445 1285,440 1290,438 1315,483 1360,470 1393,436 1420,415 1447,406 1475,400 1502,400 1528,397 1555,453 1582,466 1610,500 1690,478 1718,490 1735,535 1760,620 1790,710 1830,770 1853,780 1890,745 1940,672 1970,672 2010,720 2040,743 2070,745 2120,712 2150,705 2180,682 2210,690 2235,725 2285,754 2310,715 2340,607"/>
</g>
<g fill="#fff" shape-rendering="crispEdges">
<rect x="57" y="445" width="21" height="10"/><rect x="85" y="430" width="21" height="10"/><rect x="112" y="413" width="21" height="10"/><rect x="138" y="407" width="21" height="10"/><rect x="165" y="403" width="21" height="10"/><rect x="195" y="456" width="21" height="9"/><rect x="220" y="454" width="21" height="10"/><rect x="248" y="441" width="21" height="10"/><rect x="275" y="435" width="21" height="10"/><rect x="300" y="422" width="21" height="10"/><rect x="328" y="411" width="21" height="10"/><rect x="355" y="399" width="21" height="10"/><rect x="382" y="393" width="21" height="10"/><rect x="408" y="391" width="21" height="10"/><rect x="435" y="389" width="21" height="10"/><rect x="462" y="387" width="21" height="10"/><rect x="490" y="383" width="21" height="10"/><rect x="515" y="392" width="21" height="10"/><rect x="543" y="437" width="21" height="10"/><rect x="570" y="432" width="21" height="10"/><rect x="597" y="423" width="21" height="10"/><rect x="625" y="415" width="21" height="10"/><rect x="652" y="408" width="21" height="10"/><rect x="680" y="414" width="21" height="10"/>
<rect x="1140" y="458" width="21" height="10"/><rect x="1168" y="455" width="21" height="10"/><rect x="1195" y="452" width="21" height="10"/><rect x="1222" y="445" width="21" height="10"/><rect x="1248" y="440" width="21" height="10"/><rect x="1275" y="435" width="21" height="10"/><rect x="1355" y="465" width="21" height="10"/><rect x="1383" y="431" width="21" height="10"/><rect x="1410" y="410" width="21" height="10"/><rect x="1437" y="401" width="21" height="10"/><rect x="1465" y="395" width="21" height="10"/><rect x="1492" y="395" width="21" height="10"/><rect x="1518" y="392" width="21" height="10"/><rect x="1545" y="448" width="21" height="10"/><rect x="1572" y="461" width="21" height="10"/>
</g>
</g>
<!-- 顶 rows -->
<g class="c" font-size="13" fill="#40ffff" style="font-family:'WenQuanYi Zen Hei','Noto Sans CJK SC',sans-serif">
<text class="c" y="578" x="85 94 103 112 121 130 139 148 157 166 175 184 193 202 211 220 229 238 247 256 265 274 283">顶顶顶顶顶顶顶顶顶顶顶顶顶顶顶顶顶顶顶顶顶顶顶</text>
<text class="c" y="578" x="473 482 491 500 509 518 527 536 545 554 563 572">顶顶顶顶顶顶顶顶顶顶顶顶</text>
</g>
<g class="c" font-size="12" fill="#40ffff">
<text class="c" x="103" y="564">确认</text><text class="c" x="127" y="564">确认</text><text class="c" x="163" y="564">确认</text><text class="c" x="139" y="564">大顶</text><text class="c" x="201" y="564">大顶</text>
<text class="c" x="426" y="564">确认</text><text class="c" x="464" y="564">大顶</text>
<text class="c" x="515" y="564">确认</text><text class="c" x="553" y="564">大顶</text>
</g>
<g fill="#00ffff"><circle cx="133" cy="559" r="4.500"/><circle cx="159" cy="559" r="4.500"/><circle cx="195" cy="559" r="4.500"/><circle cx="458" cy="559" r="4.500"/><circle cx="547" cy="559" r="4.500"/></g>
<g class="c" font-size="12" fill="#ff0000">
<text class="c" x="248" y="661">★--真买点</text><text class="c" x="338" y="661">★--真买点</text><text class="c" x="609" y="661">★--真买点</text><text class="c" x="681" y="661">★--真买点</text><text class="c" x="753" y="661">★--真买点</text>
<text class="c" x="527" y="661" fill="#00ff00">★---真卖点</text>
<text class="c" x="783" y="711">底</text>
</g>
<circle cx="777" cy="707" r="5" fill="#f00"/>
<g class="c" font-size="12" fill="#ffffa0">
<text class="c" x="745" y="648">有</text><text class="c" x="763" y="648">未</text><text class="c" x="781" y="648">来</text><text class="c" x="798" y="648">底</text><text class="c" x="816" y="648">部</text>
</g>
</g>

<!-- tabs -->
<rect x="0" y="722" width="820" height="1" fill="#d00000"/>
<path d="M56 723v14M116 723v14M176 723v14M236 723v14M296 723v14" stroke="#b00000"/>
<g font-size="11" fill="#c0c0c0" text-anchor="middle" letter-spacing="-.6">
<text x="25" y="734">MA</text><text x="85" y="734">BOLL</text><text x="144" y="734">MACD</text><text x="204" y="734">RSI</text><text x="264" y="734">DMI</text>
</g>
<rect x="0" y="737" width="1043" height="2" fill="#fff"/>

<!-- status -->
<g clip-path="url(#cs)">
<g font-size="12" letter-spacing="-1.200">
<text x="2" y="750" fill="#c0c0c0"><tspan class="c" font-size="12">沪</tspan></text>
<text x="23" y="750" fill="#ff5555">2632.93</text><text x="60" y="750" fill="#ff5555">11.58</text>
<text x="90" y="750" fill="#ff5555">↑0.44</text><text x="125" y="750" fill="#c0c0c0">1178.6</text><text class="c" x="162" y="750" fill="#c0c0c0" font-size="12">亿</text>
<text x="200" y="750" fill="#c0c0c0">81/7</text>
<text x="461" y="750" fill="#c0c0c0"><tspan class="c" font-size="12">深</tspan></text>
<text x="483" y="750" fill="#ff5555">11182.53</text><text x="533" y="750" fill="#ff5555">18.53</text>
<text x="566" y="750" fill="#c0c0c0">↑471.7</text><text x="640" y="750" fill="#c0c0c0">12/7</text>
</g>
<rect x="232" y="743" width="40" height="6" fill="#f06060"/><rect x="272" y="743" width="20" height="6" fill="#40e8e8"/>
<rect x="698" y="743" width="32" height="6" fill="#f06060"/><rect x="730" y="743" width="28" height="6" fill="#40e8e8"/>
</g>
<rect x="0" y="748" width="1043" height="1" fill="#bbb"/>
<rect x="0" y="749" width="1043" height="2" fill="#f0f0f0"/>

<!-- axis -->
<rect x="819" y="73" width="1" height="451" fill="#c00000"/>
<rect x="861" y="73" width="1" height="618" fill="#c00000"/>
<rect x="819" y="524" width="2" height="200" fill="#d00000"/>
<rect x="860" y="538" width="2" height="186" fill="#d00000"/>
<path d="M820 107h4M820 151h4M820 195h4M820 239h4M820 283h4M820 327h4M820 371h4M820 415h4M820 459h4M820 503h4M820 129h2M820 173h2M820 217h2M820 261h2M820 305h2M820 349h2M820 393h2M820 437h2M820 481h2M821 556h3M821 588h3M821 619h3M821 650h3M821 682h3" stroke="#c00000" shape-rendering="crispEdges"/>
<g>
<text class="ax" x="860" y="112">26.00</text><text class="ax" x="860" y="156">24.00</text><text class="ax" x="860" y="200">22.00</text><text class="ax" x="860" y="244">20.00</text><text class="ax" x="860" y="288">18.00</text><text class="ax" x="860" y="332">16.00</text><text class="ax" x="860" y="376">14.00</text><text class="ax" x="860" y="420">12.00</text><text class="ax" x="860" y="464">10.00</text><text class="ax" x="860" y="508">8.00</text>
<text class="ax" x="860" y="560">100.00</text><text class="ax" x="860" y="592">80.00</text><text class="ax" x="860" y="623">60.00</text><text class="ax" x="860" y="654">40.00</text><text class="ax" x="860" y="686">20.00</text>
</g>
<path d="M820 228l5-6h35v12h-35z" fill="#f6f6e6"/>
<text x="860" y="233" font-size="13" letter-spacing="-1.800" fill="#f00000" text-anchor="end">20.55</text>

<!-- right panel -->
<g clip-path="url(#cr)"><text x="908" y="86" font-size="13" fill="#c0c0c0" letter-spacing="-.8">600543<tspan class="c" dx="7" font-size="13.500">莫高股份</tspan>(457</text></g>
<rect x="862" y="90" width="181" height="1" fill="#d00000"/>
<rect x="864" y="105" width="179" height="2" fill="#ff5a5a"/>
<rect x="862" y="186" width="181" height="1" fill="#d00000"/>
<rect x="862" y="202" width="181" height="1" fill="#d00000"/>
<rect x="862" y="282" width="181" height="1" fill="#d00000"/>
<rect x="864" y="393" width="141" height="2" fill="#ff5a5a"/><rect x="1005" y="393" width="38" height="2" fill="#40e8e8"/>
<rect x="862" y="409" width="181" height="1" fill="#d00000"/>
<g>
<text class="p" x="865" y="103">委比</text><text class="p" x="979" y="103">委差</text>
<text class="v" x="971" y="103">100.00%</text>
<text class="p" x="865" y="118">卖⑤</text><text class="p" x="865" y="134">卖④</text><text class="p" x="865" y="150">卖③</text><text class="p" x="865" y="166">卖②</text><text class="p" x="865" y="182">卖①</text>
<text class="p" x="865" y="199">最新</text><text class="v" x="971" y="199">20.55</text><text class="p" x="979" y="199">现手</text>
<rect x="936" y="203" width="35" height="14" fill="#ff5a5a"/>
<text class="p" x="865" y="215">买①</text><text class="v" x="971" y="215" style="fill:#d8d8d8">20.55</text>
<text class="p" x="865" y="231">买②</text><text class="v" x="971" y="231">20.54</text>
<text class="p" x="865" y="247">买③</text><text class="v" x="971" y="247">20.53</text>
<text class="p" x="865" y="263">买④</text><text class="v" x="971" y="263">20.51</text>
<text class="p" x="865" y="279">买⑤</text><text class="v" x="971" y="279">20.50</text>
<text class="p" x="865" y="295">涨跌</text><text class="v" x="971" y="295">1.87</text><text class="p" x="979" y="295">均价</text>
<text class="p" x="865" y="311">涨幅</text><text class="v" x="971" y="311">10.01%</text><text class="p" x="979" y="311">前收</text>
<text class="p" x="865" y="327">振幅</text><text class="v" x="971" y="327" style="fill:#c0c0c0">9.48%</text><text class="p" x="979" y="327">今开</text>
<text class="p" x="865" y="343">总手</text><text class="v" x="971" y="343" style="fill:#c0c0c0">104299</text><text class="p" x="979" y="343">最高</text>
<text class="p" x="865" y="359">总额</text><text class="v" x="971" y="359" style="fill:#c0c0c0">20755</text><text class="p" x="979" y="359">最低</text>
<text class="p" x="865" y="375">换手</text><text class="v" x="971" y="375" style="fill:#c0c0c0">8.70%</text><text class="p" x="979" y="375">量比</text>
<text class="p" x="865" y="391">分笔</text><text class="v" x="971" y="391" style="fill:#c0c0c0">2325</text><text class="p" x="979" y="391">均量</text>
<text class="p" x="865" y="407">外盘</text><text class="v" x="971" y="407">63768</text><text class="p" x="979" y="407">内盘</text>
</g>
<!-- ticks -->
<g>
<text class="tm" x="865" y="426">14:58</text><text class="tm" x="883" y="442">:20</text><text class="tm" x="883" y="458">:24</text><text class="tm" x="883" y="474">:34</text><text class="tm" x="883" y="490">:40</text><text class="tm" x="883" y="506">:44</text><text class="tm" x="883" y="522">:50</text><text class="tm" x="883" y="538">:54</text><text class="tm" x="883" y="554">:59</text><text class="tm" x="865" y="570">14:59</text><text class="tm" x="883" y="586">:09</text><text class="tm" x="883" y="602">:13</text><text class="tm" x="883" y="618">:20</text><text class="tm" x="883" y="634">:25</text><text class="tm" x="883" y="650">:31</text><text class="tm" x="883" y="666">:35</text><text class="tm" x="883" y="682">:41</text>
<text class="t" x="949" y="426">20.55</text><text class="t" x="949" y="442">20.55</text><text class="t" x="949" y="458">20.55</text><text class="t" x="949" y="474">20.55</text><text class="t" x="949" y="490">20.55</text><text class="t" x="949" y="506">20.55</text><text class="t" x="949" y="522">20.55</text><text class="t" x="949" y="538">20.55</text><text class="t" x="949" y="554">20.55</text><text class="t" x="949" y="570">20.55</text><text class="t" x="949" y="586">20.55</text><text class="t" x="949" y="602">20.55</text><text class="t" x="949" y="618">20.55</text><text class="t" x="949" y="634">20.55</text><text class="t" x="949" y="650">20.55</text><text class="t" x="949" y="666">20.55</text><text class="t" x="949" y="682">20.55</text>
</g>
<path class="dl" d="M862 555.500H1042"/>

<!-- white right edge -->
<rect x="1043" y="27" width="6" height="724" fill="#fff"/>

<!-- watermark -->
<rect x="822" y="690" width="227" height="61" fill="#fff"/>
<text class="c" x="827" y="720" font-size="30" font-weight="bold" fill="#f04818" textLength="209" stroke="#f04818" stroke-width=".8">股票公式指标网</text>
<text x="830" y="742" font-size="25" font-weight="bold" fill="#ff9a10" textLength="204" lengthAdjust="spacingAndGlyphs" style="font-family:'Liberation Sans',sans-serif">www.gszx.com.cn</text>
</svg>
</body></html>
